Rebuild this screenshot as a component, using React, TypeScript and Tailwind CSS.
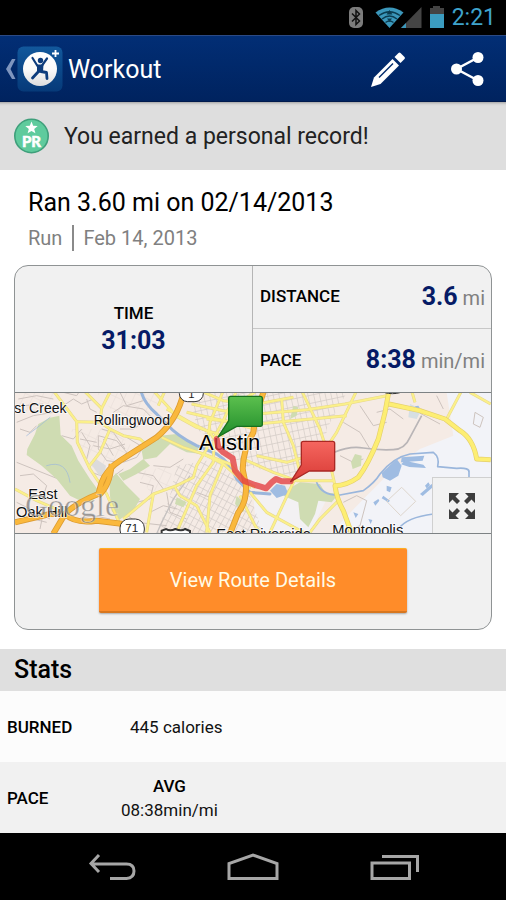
import React from "react";

function StatusBar() {
  return (
    <div className="flex h-[35px] items-center justify-end bg-black pr-[10px]">
      <svg className="h-[35px] w-[100px]" viewBox="0 0 100 35" aria-label="Bluetooth, Wi-Fi, signal, battery" role="img">
        <rect x="3" y="7" width="14" height="21" rx="5" fill="#7c7c7c" />
        <path d="M6 13.500L13.500 21 10 24.500V10.500L13.500 14 6 21.500" fill="none" stroke="#111" strokeWidth="1.500" />
        <path d="M43.500 28L29.500 12.500Q43.500 2.500 57.500 12.500Z" fill="#3b97bb" />
        <path d="M33 15.500Q43.500 8 54 15.500M36 19Q43.500 13 51 19M39.500 22.500Q43.500 19.500 47.500 22.500" fill="none" stroke="#0b3c50" strokeWidth="1.500" />
        <path d="M43.500 10l-3 4.500h6zM43.500 22l-2.500-3.500h5z" fill="#0b3c50" />
        <path d="M75.500 7V28H55Z" fill="#444" />
        <path d="M60 23V28H55Z" fill="#3b97bb" />
        <path d="M87 6h7v2h4v6H84V8h3z" fill="#444" />
        <rect x="84" y="14" width="14" height="14" fill="#3b9cc0" />
      </svg>
      <span className="ml-[6px] text-[23px] leading-[35px] text-[#3fa3cc]">2:21</span>
    </div>
  );
}

function AppLogo() {
  return (
    <svg className="size-[46px]" viewBox="0 0 46 46" aria-hidden="true">
      <defs>
        <linearGradient id="tile" x1="0" y1="0" x2="0" y2="1">
          <stop offset="0" stopColor="#12589c" />
          <stop offset="1" stopColor="#063a79" />
        </linearGradient>
        <linearGradient id="disc" x1="0" y1="0" x2="0" y2="1">
          <stop offset="0" stopColor="#fff" />
          <stop offset=".5" stopColor="#fafafa" />
          <stop offset="1" stopColor="#ddd" />
        </linearGradient>
      </defs>
      <rect x=".5" y=".5" width="45" height="45" rx="6" fill="url(#tile)" />
      <circle cx="23" cy="23" r="17" fill="url(#disc)" />
      <path d="M35 7.500h7M38.500 4v7" stroke="#fff" strokeWidth="1.800" />
      <circle cx="23.500" cy="14.500" r="2.700" fill="#0d3c7c" />
      <path d="M15.500 12l5 8M30 12.500l-5 7" stroke="#0d3c7c" strokeWidth="2.200" strokeLinecap="round" />
      <path d="M20 18.500l6.500 0-.5 7.500-6 1z" fill="#0d3c7c" />
      <path d="M21.500 25.500l-6 6.500M24 25.500l5.500 1 .5 6" fill="none" stroke="#0d3c7c" strokeWidth="2.800" strokeLinecap="round" strokeLinejoin="round" />
    </svg>
  );
}

function Header() {
  return (
    <header className="flex h-[67px] items-center border-t border-b border-t-[#2b4a85] border-b-[#001a4d] bg-linear-to-b from-[#022e75] to-[#00235f] pr-[6px]">
      <button type="button" aria-label="Back" className="flex items-center pl-[5px]">
        <svg className="h-[22px] w-[12px]" viewBox="0 0 12 22" aria-hidden="true">
          <path d="M7 1h3.500L5.500 11l5 10H7L1 11z" fill="#7e95be" />
        </svg>
        <AppLogo />
      </button>
      <h1 className="ml-[5px] flex-1 pt-[2px] text-[25px] leading-8 text-white">Workout</h1>
      <button type="button" aria-label="Edit workout" className="flex size-[64px] items-center justify-center">
        <svg className="size-[36px]" viewBox="0 0 36 36" aria-hidden="true">
          <path d="M1 36L4 26.500 22.500 8 29 14.500 10.500 33z" fill="#fff" />
          <path d="M24.500 6L28.500 2q1-1 2 0l4 4q1 1 0 2L30.500 12z" fill="#fff" />
          <path d="M9 26.500L23 12.500" stroke="#01296a" strokeWidth="1.500" />
        </svg>
      </button>
      <button type="button" aria-label="Share workout" className="ml-4 flex size-[64px] items-center justify-center">
        <svg className="size-[36px]" viewBox="0 0 36 36" aria-hidden="true">
          <path d="M28 6.500L6.500 18 28 29.500" fill="none" stroke="#fff" strokeWidth="2.500" />
          <circle cx="28" cy="6.500" r="5.500" fill="#fff" />
          <circle cx="6.500" cy="18" r="5.500" fill="#fff" />
          <circle cx="28" cy="29.500" r="5.500" fill="#fff" />
        </svg>
      </button>
    </header>
  );
}

function RecordBanner() {
  return (
    <div className="flex h-[68px] items-center bg-[#dedede] pl-[14px] shadow-[inset_0_4px_3px_-3px_rgba(0,0,0,0.3)]">
      <svg className="size-[36px]" viewBox="0 0 36 36" role="img" aria-label="PR">
        <circle cx="17.500" cy="18" r="16.700" fill="#5fcb9d" stroke="#3f9f7b" strokeWidth="1.600" />
        <path d="M17.500 3.500l1.700 4.200 4.500.3-3.500 2.900 1.200 4.400-3.900-2.400-3.900 2.400 1.200-4.400-3.500-2.900 4.500-.3z" fill="#fff" />
        <text x="17.500" y="28.500" textAnchor="middle" fontSize="15" fontWeight="900" fill="#fff" stroke="#fff" strokeWidth=".5" fontFamily="Lato, sans-serif">PR</text>
      </svg>
      <p className="ml-[14px] pt-[2px] text-[23px] leading-8 text-[#222]">You earned a personal record!</p>
    </div>
  );
}

/* City blocks: pattern rotated to the local street grid */
function BlockPattern({ id, angle, size, color }: { id: string; angle: number; size: number; color: string }) {
  return (
    <pattern id={id} width={size} height={size * 1.4} patternUnits="userSpaceOnUse" patternTransform={`rotate(${angle})`}>
      <path d={`M0 0H${size}M0 0V${size * 1.4}`} stroke={color} strokeWidth="4" fill="none" />
    </pattern>
  );
}

const yellowRoads = [
  "M130 15L200 108 202 170 240 250 290 325 340 440",
  "M222 15L275 68 270 110 200 108",
  "M275 68L302 15",
  "M270 110L300 130 340 150 390 160 412 180",
  "M300 130L270 200 235 245",
  "M15 310L80 345 150 375",
  "M430 15L500 92 560 125 640 150",
  "M445 60L465 15",
  "M455 155L520 185 580 205 640 235 690 280 735 305",
  "M470 70L540 110 600 140 612 160",
  "M530 80L640 105 735 130",
  "M545 55L640 75 740 85 890 72 1005 55 1130 30",
  "M570 15L640 45 740 55 850 35",
  "M590 100L740 115 1010 90",
  "M640 15L600 110 590 190 560 240 550 275 500 300 430 325 340 400",
  "M680 15L640 105 610 160",
  "M612 165L610 230 560 300 500 440",
  "M640 230L600 330 590 440",
  "M495 305L510 330 560 360 600 440",
  "M430 325L410 440",
  "M580 205L660 235 720 310",
  "M670 60L735 20",
  "M815 40L820 110 850 180 870 260 850 290 780 440",
  "M875 15L930 130 955 210 975 300",
  "M1040 15L980 140 940 200",
  "M740 210L830 230 880 215",
  "M700 220L790 260 860 285 970 285",
  "M720 320L770 380 880 440",
  "M690 330L735 420 750 440",
  "M990 340L930 400 900 440",
  "M1205 15L1215 50",
  "M1355 15L1310 100",
  "M1380 20L1442 55",
];

const thinStreets =
  "M20 110L70 90 130 80M155 150L190 160 215 130M160 60L190 40 215 55 250 40M215 140L240 180 230 220M265 150L320 165 350 200 330 230 290 225 265 190zM280 160L310 210M350 155L400 185 380 215 340 230M310 80L340 60 400 70 430 100M330 20L350 60 400 45M20 230L70 250 120 270 170 290M30 270L70 265 110 300 100 330M210 160L260 170M245 260L300 280 340 250M380 260L430 270 460 310M390 290L430 300 420 340 380 350M430 240L480 245 520 220M470 320L480 380 530 400M200 400L250 390 300 400M20 350L60 370 120 400M100 380L90 430M340 380L380 410 470 420M230 40L240 70 260 80M25 40L80 30 130 40M40 60L100 55M560 320L600 335M1000 350L1040 330 1070 345 1050 420 1005 440M1225 80L1290 115M1280 30L1300 70M1395 80L1420 95 1410 125 1390 115zM1100 80L1140 70 1180 100M1050 60L1090 120 1130 110M1000 110L1050 140 1080 190M990 210L1030 230 1060 220M30 130L60 140 80 120M70 400L110 410M275 130L310 140 345 190M250 180L300 190 345 175M400 110L370 130 330 130M160 20L200 30 210 15M420 380L460 360 500 370M360 420L400 430";

const highways =
  "M522 15Q505 100 440 155L330 225Q290 250 275 290L265 325Q200 350 165 385L130 444M305 235Q300 300 265 330M165 385Q195 415 260 405L340 415M15 410L120 385 165 385M762 15Q735 90 730 140 700 190 698 250L708 300Q710 350 685 380L660 444";

const mainRoads =
  "M1137 15L1125 80 1105 160Q1075 235 1045 275 1010 300 975 300 980 340 1000 375L1025 444M1137 55L1230 75 1305 100 1350 135Q1390 160 1400 220L1442 222";

function RouteMap() {
  return (
    <svg className="block h-[140px] w-full" viewBox="15 22 1428 420" preserveAspectRatio="xMidYMid slice" role="img" aria-label="Route map, Austin" fontFamily="Liberation Sans, Arial, sans-serif">
      <defs>
        <BlockPattern id="westBlocks" angle={25} size={25} color="#ddd3ce" />
        <BlockPattern id="eastBlocks" angle={-12} size={17} color="#d3ccc6" />
        <BlockPattern id="southBlocks" angle={28} size={16} color="#d3ccc7" />
        <linearGradient id="startPin" x1="0" y1="0" x2="0" y2="1">
          <stop offset="0" stopColor="#5cc04e" />
          <stop offset="1" stopColor="#1f8b2a" />
        </linearGradient>
        <linearGradient id="endPin" x1="0" y1="0" x2="0" y2="1">
          <stop offset="0" stopColor="#f5665f" />
          <stop offset="1" stopColor="#d83a35" />
        </linearGradient>
      </defs>

      <rect x="15" y="21" width="1428" height="423" fill="#f5ebe5" />
      <path d="M1310 21H1443V444H960L1070 330 1150 250 1230 190 1330 150z" fill="#f2f3f8" />
      <path d="M730 330L830 320 950 340 900 444H740z" fill="#f3f1f3" />

      <path d="M540 21H1010L950 130 945 240 840 270 700 240 560 130z" fill="url(#eastBlocks)" />
      <path d="M500 240L620 220 720 330 760 444H440L480 330z" fill="url(#southBlocks)" />
      <path d="M180 130L300 130 380 190 290 240 250 250zM380 260L480 240 490 300 420 320zM40 21H150L110 80 20 80zM260 21H460L420 100 320 90z" fill="url(#westBlocks)" opacity=".45" />
      <path d={thinStreets} fill="none" stroke="#cdc3be" strokeWidth="3" />

      <g fill="#cfdcb2">
        <path d="M120 96L148 90 152 148 185 180 205 225 240 280 262 310 250 345 225 352 180 330 140 280 95 240 50 208 52 190 75 145 85 115z" />
        <path d="M318 262L345 295 390 340 372 372 328 402 305 375 300 330 298 290z" />
        <path d="M325 265L360 250 400 220 420 240 380 265 340 285z" />
        <path d="M395 195L450 150 500 145 560 180 575 205 530 200 480 175 440 215 400 222z" />
        <path d="M835 310L870 290 930 295 945 320 985 325 965 350 925 345 915 385 895 425 870 400 865 350 820 330z" />
        <path d="M500 335L530 350 520 365 495 355zM850 60l15 5-5 25-20 10zM680 330l25 25-5 25-25-25zM1035 205l20 5-2 30-25 10-5-20z" />
      </g>
      <path d="M258 220l30 20-5 25-15 5-25-35z" fill="#dcdbdb" />
      <path d="M1200 55l35 15-15 30-25-5z" fill="#d6dfe2" />

      <g fill="none" stroke="#9ab6dc" strokeLinecap="round" strokeLinejoin="round">
        <path d="M393 15Q400 50 440 85L470 115Q500 150 560 180L620 205Q660 230 680 280L720 320 780 325" strokeWidth="9" />
        <path d="M920 290Q935 330 990 328L1060 315Q1095 290 1110 265 1150 215 1200 205L1270 200Q1290 215 1283 243L1340 248Q1380 245 1377 260V290" strokeWidth="5" />
        <path d="M50 150Q90 120 120 95M110 240Q170 220 180 290" strokeWidth="2" />
        <path d="M1165 430Q1190 395 1270 385" strokeWidth="4" />
      </g>
      <g fill="#9fbce2">
        <path d="M780 315L800 295 825 300 835 325 800 337zM1115 262L1160 220 1175 240 1165 270 1140 285 1118 275z" />
        <path d="M1175 215l68-5-5 15-65 5zM1185 225l55 12 8 10-50-3-25-8zM1130 300l15 5-5 15-10-5zM1215 62l10-2 5 8-10 5z" />
        <path d="M1230 325l35-30 5 8-32 28zM1245 300l10-10 5 8-10 10zM1120 330l20 15-5 5-20-12zM1030 380l15 5-8 12zM1090 350l15-10 3 5-12 15zM1075 400l12 3-5 12z" />
      </g>
      <path d="M973 200Q1020 180 1060 187T1150 192Q1185 190 1200 155L1235 90" fill="none" stroke="#b9b5b7" strokeWidth="5" />
      <path d="M540 270L490 340 460 400 440 444" fill="none" stroke="#c6c2c1" strokeWidth="4" />
      <path d="M1175 305L1217 347 1172 390 1130 347z" fill="none" stroke="#ddd5cc" strokeWidth="3" />

      <g fill="none" strokeLinejoin="round">
        <g stroke="#e6d78c" strokeWidth="9">
          {yellowRoads.map((d) => <path key={d} d={d} />)}
        </g>
        <g stroke="#fbf08a" strokeWidth="6">
          {yellowRoads.map((d) => <path key={d} d={d} />)}
        </g>
        <path d={mainRoads} stroke="#e4cf6c" strokeWidth="15" />
        <path d={mainRoads} stroke="#fdee72" strokeWidth="11" />
      </g>
      <g fill="none" strokeLinejoin="round">
        <path d={highways} stroke="#dc9b31" strokeWidth="18" />
        <path d={highways} stroke="#fab83c" strokeWidth="13" />
      </g>

      <g fill="#fff" stroke="#333" strokeWidth="3">
        <rect x="508" y="-10" width="72" height="58" rx="25" />
        <rect x="330" y="400" width="73" height="60" rx="27" />
        <path d="M455 450V435L468 430Q480 438 496 430 515 438 525 430L540 436V450z" strokeWidth="6" />
        <ellipse cx="1147" cy="15" rx="30" ry="9" />
      </g>
      <g fill="#222">
        <text x="535" y="36" fontSize="34">1</text>
        <text x="346" y="439" fontSize="35">71</text>
      </g>

      <g fill="#111" stroke="#fff" strokeWidth="5" strokeOpacity=".75" paintOrder="stroke" fontSize="44">
        <text x="13" y="83" fontSize="42">st Creek</text>
        <text x="251" y="117" fontSize="42">Rollingwood</text>
        <text x="567" y="194" fontSize="66" fill="#000">Austin</text>
        <text x="55" y="341">East</text>
        <text x="18" y="393">Oak Hill</text>
        <text x="619" y="459">East Riverside</text>
        <text x="967" y="447">Montopolis</text>
      </g>
      <text x="45" y="390" fontSize="96" fontFamily="Liberation Serif, Times New Roman, serif" fill="#666" fillOpacity=".65" stroke="#fff" strokeOpacity=".5" strokeWidth="2">Google</text>

      <path d="M620 160L625 185 640 200 668 218 675 255 700 285 735 298 752 303 768 308 785 290 798 280 815 287 842 287" fill="none" stroke="#e33c40" strokeOpacity=".78" strokeWidth="18" strokeLinejoin="round" strokeLinecap="round" />

      <path d="M656 38q0-6 6-6h89q6 0 6 6v78q0 6-6 6H680L624 154 656 105z" fill="url(#startPin)" stroke="#17701f" strokeWidth="4" strokeLinejoin="round" />
      <path d="M874 173q0-6 6-6h88q6 0 6 6v77q0 6-6 6H898L842 288 874 238z" fill="url(#endPin)" stroke="#a92824" strokeWidth="4" strokeLinejoin="round" />
    </svg>
  );
}

function Metric({ label, value, unit }: { label: string; value: string; unit: string }) {
  return (
    <div className="flex h-[63px] items-center justify-between pr-[6px] pl-[7px]">
      <dt className="text-[17px] font-medium text-black">{label}</dt>
      <dd className="text-[20px] leading-8 text-[#808080]">
        <span className="text-[25px] font-bold text-[#061b66]">{value}</span> {unit}
      </dd>
    </div>
  );
}

function RouteCard() {
  return (
    <section className="mx-[14px] overflow-hidden rounded-[14px] border border-[#8f9394] bg-[#f1f1f1]">
      <dl className="grid grid-cols-2">
        <div className="flex flex-col items-center justify-center border-r border-[#b5b5b5]">
          <dt className="text-[17px] leading-6 font-medium text-black">TIME</dt>
          <dd className="text-[25px] leading-8 font-bold text-[#061b66]">31:03</dd>
        </div>
        <div className="divide-y divide-[#c8c8c8]">
          <Metric label="DISTANCE" value="3.6" unit="mi" />
          <Metric label="PACE" value="8:38" unit="min/mi" />
        </div>
      </dl>
      <div className="relative border-y border-[#7d8284]">
        <RouteMap />
        <button type="button" aria-label="Expand map" className="absolute right-0 bottom-0 flex h-[56px] w-[59px] items-center justify-center border-t border-l border-[#d0d0d0] bg-[#f2f2f2]">
          <svg className="size-[28px]" viewBox="0 0 28 28" fill="#3d3d3d" aria-hidden="true">
            <path d="M1 1h10L7.500 4.500 12 9 9 12 4.500 7.500 1 11z" />
            <path d="M27 1H17l3.500 3.500L16 9l3 3 4.500-4.500L27 11z" />
            <path d="M1 27h10l-3.500-3.500L12 19l-3-3-4.500 4.500L1 17z" />
            <path d="M27 27H17l3.500-3.500L16 19l3-3 4.500 4.500L27 17z" />
          </svg>
        </button>
      </div>
      <div className="flex justify-center pt-[14px] pb-[16px]">
        <button type="button" className="h-[65px] w-[308px] rounded-[2px] border-t border-b-2 border-t-[#ffae1f] border-b-[#d8771f] bg-[#ff8c29] text-[20px] text-[#fffbe6] shadow-[0_1px_2px_rgba(0,0,0,0.3)]">
          View Route Details
        </button>
      </div>
    </section>
  );
}

function Stats() {
  return (
    <section className="mt-[19px]">
      <h2 className="bg-[#dfdfdf] pl-[14px] text-[25px] leading-[42px] font-medium text-black">Stats</h2>
      <table className="w-full text-left text-[17px] leading-6 text-[#111]">
        <tbody>
          <tr className="h-[71px] bg-[#fcfcfc]">
            <th scope="row" className="w-[121px] pl-[7px] font-medium text-black">BURNED</th>
            <td className="pl-[9px]">445 calories</td>
          </tr>
          <tr className="h-[71px] bg-[#f1f1f1]">
            <th scope="row" className="pl-[7px] font-medium text-black">PACE</th>
            <td>
              <div className="inline-flex flex-col items-center align-middle">
                <span className="font-medium text-black">AVG</span>
                <span>08:38min/mi</span>
              </div>
            </td>
          </tr>
        </tbody>
      </table>
    </section>
  );
}

function NavBar() {
  return (
    <nav className="mt-auto grid h-[67px] grid-cols-[1fr_140px_1fr] items-center bg-black text-[#a6a6a6]">
      <button type="button" aria-label="Back" className="flex justify-end pr-[47px]">
        <svg className="h-[28px] w-[48px]" viewBox="0 0 48 28" fill="none" stroke="currentColor" strokeWidth="3" aria-hidden="true">
          <path d="M11 2L3 10.500 11 19M3 11H38.500Q46 11 46 18T38.500 25.500H22" />
        </svg>
      </button>
      <button type="button" aria-label="Home" className="flex justify-center">
        <svg className="h-[28px] w-[54px]" viewBox="0 0 54 28" fill="none" stroke="currentColor" strokeWidth="3" aria-hidden="true">
          <path d="M3 25.500V10.500L27 2 51 10.500V25.500Z" />
        </svg>
      </button>
      <button type="button" aria-label="Recent apps" className="flex justify-start pl-[47px]">
        <svg className="h-[28px] w-[50px]" viewBox="0 0 50 28" fill="none" stroke="currentColor" strokeWidth="3" aria-hidden="true">
          <path d="M2 10h37.500v15.500H2zM12 3.500H47.500V19" />
        </svg>
      </button>
    </nav>
  );
}

export default function App() {
  return (
    <div className="flex min-h-screen flex-col bg-white font-[Roboto,sans-serif]">
      <StatusBar />
      <Header />
      <main>
        <RecordBanner />
        <div className="pt-[17px] pb-[14px] pl-[28px]">
          <h2 className="text-[25px] leading-8 text-black">Ran 3.60 mi on 02/14/2013</h2>
          <div className="mt-[6px] flex items-center text-[20px] leading-[26px] text-[#808080]">
            <span>Run</span>
            <span className="ml-[10px] border-l-2 border-[#8a8a8a] pl-[9px]">Feb 14, 2013</span>
          </div>
        </div>
        <RouteCard />
        <Stats />
      </main>
      <NavBar />
    </div>
  );
}
